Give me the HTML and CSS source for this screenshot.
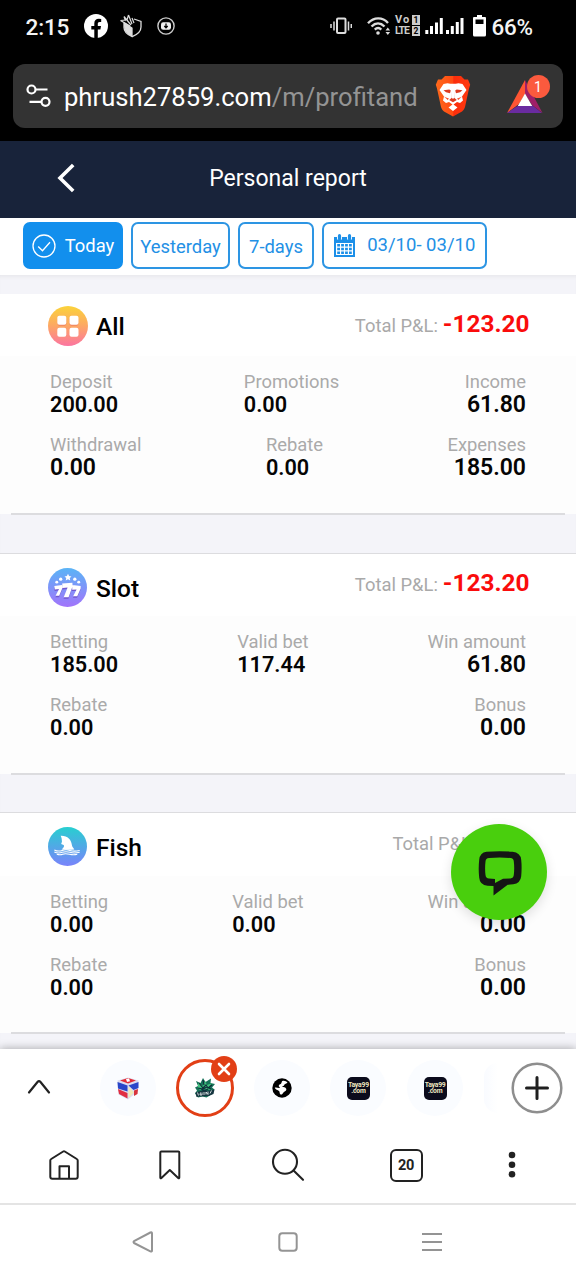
FILE: index.html
```html
<!DOCTYPE html>
<html lang="en">
<head>
<meta charset="utf-8">
<meta name="viewport" content="width=device-width, initial-scale=1">
<title>Personal report</title>
<link rel="stylesheet" href="styles.css">
</head>
<body>
<div class="phone">
  <div class="status">
    <span class="clock">2:15</span>
    <svg class="st-fb" width="24" height="24" viewBox="0 0 24 24"><circle cx="12" cy="12" r="12" fill="#fff"/><path d="M10.300 24v-8.600H7.300v-3.400h3V9.400c0-3 1.800-4.600 4.500-4.600l2.400.2v3h-1.500c-1.400 0-1.900.8-1.900 1.800V12h3.200l-.6 3.400h-2.600V24z" fill="#000"/></svg>
    <svg class="st-shield" width="24" height="24" viewBox="0 0 24 24" fill="none" stroke="#ddd" stroke-width="1.300"><path d="M4 9v4.500c0 4.500 4.500 7.600 8.200 9.200 4-1.700 8.800-5 8.800-9.700V7.500l-7-2.500"/><path d="M4.500 9l7.500 5v8C8.500 20 5 17.500 4.800 13z" fill="#ddd"/><path d="M.5 6.500L10 12M4 2.500L11 11M8.500 1l3.500 9M.5 6.500L6 6M4 2.500L5.500 7M8.500 1L7 6M12 4l2 5" stroke-width="1.200"/></svg>
    <svg class="st-rec" width="18" height="18" viewBox="0 0 18 18"><circle cx="9" cy="9" r="8.100" fill="none" stroke="#ccc" stroke-width="1.400"/><rect x="4" y="5.300" width="10" height="7.400" rx="2.200" fill="#eee"/><path d="M9 6.500v4M7.300 9L9 10.800 10.700 9" stroke="#000" fill="none" stroke-width="1.300"/></svg>
    <svg class="st-vib" width="22" height="18" viewBox="0 0 22 18" fill="none" stroke="#ddd" stroke-width="2"><rect x="7" y="1.500" width="8.500" height="14.500" rx="1"/><path d="M4 4.500v9M18.500 4.500v9M1 7v4M21.300 7v4" stroke-width="1.500"/></svg>
    <svg class="st-wifi" width="24" height="20" viewBox="0 0 24 20" fill="none" stroke="#ddd" stroke-width="2.400"><path d="M1 7.200C7 .8 15.500.8 21 7M4.500 10.500c4-4 9-4 13 0M7.800 13.700c2-2 4.500-2 6.500 0"/><circle cx="11" cy="17" r="1.800" fill="#ddd" stroke="none"/><path d="M18.500 14.500l2.300-3 2.300 3zM18.500 16l2.300 3 2.300-3z" fill="#ddd" stroke="none"/></svg>
    <span class="st-lte"><span class="lte-a">Vo</span><i>1</i><span class="lte-b">LTE</span><i>2</i></span>
    <svg class="st-sig" width="39" height="18" viewBox="0 0 39 18" stroke="#fff" stroke-width="3"><path d="M1.800 17v-4M6.500 17V9M11.500 17V5.500M16.300 17V1M22.500 17v-4M27.300 17V9M32.300 17V5M37 17V1"/></svg>
    <svg class="st-bat" width="13" height="22" viewBox="0 0 13 22"><path d="M4 0h5v2h3a1 1 0 0 1 1 1v17a1.500 1.500 0 0 1-1.500 1.500h-10A1.500 1.500 0 0 1 0 20V3a1 1 0 0 1 1-1h3z" fill="#fff"/><path d="M2.500 4.500h8V9h-8z" fill="#000"/></svg>
    <span class="pct">66%</span>
  </div>

  <div class="urlwrap">
    <div class="urlbar">
      <svg width="26" height="24" viewBox="0 0 26 24" fill="none" stroke="#fff" stroke-width="2.200"><circle cx="5.500" cy="5.500" r="4"/><path d="M9.500 5.500H21.500M3.500 17.800H15"/><circle cx="19.500" cy="17.800" r="4"/></svg>
      <span class="url">phrush27859.com<span class="path">/m/profitand</span></span>
      <svg class="lion" width="36" height="42" viewBox="0 0 36 42"><defs><linearGradient id="lg" x1="0" x2="1"><stop offset="0" stop-color="#ff6a1c"/><stop offset=".5" stop-color="#ff4a12"/><stop offset=".52" stop-color="#fb2d0b"/><stop offset="1" stop-color="#ff3a10"/></linearGradient></defs><path d="M10 1h16l3.500 3.600 3.500-.2 2.200 5.400-1.200 3.800-4 18.500c-.6 2-1.500 3.100-3 4.300L18 41.500 9 36.400c-1.500-1.200-2.400-2.300-3-4.300L2 13.600.8 9.800 3 4.400l3.500.2z" fill="url(#lg)"/><path d="M12.500 8.300q5.500 1 11 0l4 .7 4 6-4.500 6.500 1 4-3 2.500-3-1-3.500 2.500 4 3-4.500 3.500-4.500-3.500 4-3-3.500-2.500-3 1-3-2.500 1-4L4.500 15l4-6z" fill="#fff"/><path d="M8.500 15.200l5.800-.8 1.500 1.200-.8 2.600-4-.9zM27.500 15.200l-5.800-.8-1.500 1.200.8 2.600 4-.9z" fill="#dd3b20"/><path d="M16.300 15.500l.5 7.300-2.600 2.300 3.800 2.100 3.800-2.100-2.600-2.300.5-7.300-.7 8h-2z" fill="#dd3b20"/><path d="M9 21.500l3.700 3.500 1.300-1.500-3-1zM27 21.500L23.300 25 22 23.500l3-1z" fill="#f7502c"/></svg>
      <div class="bat">
        <svg width="38" height="34" viewBox="0 0 38 34"><path d="M19 0v14l-6 10L1 33z" fill="#ff5533"/><path d="M1 33l12-8h13l10 8z" fill="#6a2ba0"/><path d="M19 0l17.500 33L26 25l-7-11z" fill="#a01f68"/><path d="M19 13.500l7.200 12.500H11.800z" fill="#fff"/></svg>
        <span class="badge">1</span>
      </div>
    </div>
  </div>

  <header class="head">
    <svg class="back" width="20" height="32" viewBox="0 0 20 32" fill="none" stroke="#fff" stroke-width="3.600"><path d="M17.200 3L4 16l13.200 13"/></svg>
    <h1>Personal report</h1>
  </header>

  <nav class="filters">
    <button class="pill active"><svg width="24" height="24" viewBox="0 0 24 24" fill="none" stroke="#fff" stroke-width="1.300"><circle cx="12" cy="12" r="11"/><path d="M6.200 12.500l4.300 4.300 7.500-8.600"/></svg><span>Today</span></button>
    <button class="pill plain wide">Yesterday</button>
    <button class="pill plain">7-days</button>
    <button class="pill date"><svg width="21" height="23" viewBox="0 0 21 23"><path d="M0 3h21v20H0z" fill="#1c8fe8"/><path d="M2 9h17v12H2z" fill="#fff"/><path d="M3.200 11.300h14.600M3.200 15h14.600M3.200 18.700h14.600" stroke="#1c8fe8" stroke-width="2.600" stroke-dasharray="2.800 1.130"/><path d="M5.500 0v5.500M15.500 0v5.500" stroke="#fff" stroke-width="5"/><path d="M5.500 1.700v3M15.500 1.700v3" stroke="#1c8fe8" stroke-width="3.200" stroke-linecap="round"/></svg><span>03/10- 03/10</span></button>
  </nav>

  <main class="report">
    <section class="card first">
      <div class="card-head">
        <svg class="cat" width="40" height="40" viewBox="0 0 40 40"><defs><linearGradient id="ga" x2="0" y2="1"><stop offset="0" stop-color="#fbd33a"/><stop offset=".5" stop-color="#fda765"/><stop offset="1" stop-color="#fb75a0"/></linearGradient></defs><circle cx="20" cy="20" r="20" fill="url(#ga)"/><g fill="#ee8262"><rect x="9.500" y="11" width="8.800" height="8.800" rx="2"/><rect x="21.500" y="11" width="8.800" height="8.800" rx="2"/></g><g fill="#fff"><rect x="9.300" y="9.700" width="9" height="9" rx="2"/><rect x="21.500" y="9.700" width="9" height="9" rx="2"/><rect x="9.300" y="21.700" width="9" height="9" rx="2"/><rect x="21.500" y="21.700" width="9" height="9" rx="2"/></g></svg>
        <h2>All</h2>
        <div class="total">Total P&amp;L: <b>-123.20</b></div>
      </div>
      <div class="stats">
        <div class="row"><div class="stat"><span>Deposit</span><b>200.00</b></div><div class="stat"><span>Promotions</span><b>0.00</b></div><div class="stat end"><span>Income</span><b>61.80</b></div></div>
        <div class="row"><div class="stat"><span>Withdrawal</span><b class="lg">0.00</b></div><div class="stat"><span>Rebate</span><b>0.00</b></div><div class="stat end"><span>Expenses</span><b>185.00</b></div></div>
      </div>
    </section>

    <section class="card">
      <div class="card-head">
        <svg class="cat" width="39" height="39" viewBox="0 0 40 40"><defs><linearGradient id="gb" x2="0" y2="1"><stop offset="0" stop-color="#5ab4f6"/><stop offset="1" stop-color="#a274fb"/></linearGradient></defs><circle cx="20" cy="20" r="20" fill="url(#gb)"/><path d="M6.500 18.500l8-1 .5 2.500-3.500 8.500H7.800l3.500-7-4.300.5zM14.500 16l10.500-1 .3 3.500-4.200 11.500h-5l4-10-5 .5zM25 17.500l8.500 1v2.500L30 29h-4.200l3.500-7-4.500.2z" fill="#7257ce" transform="translate(-.2 1.500)"/><path d="M6.500 18.500l8-1 .5 2.500-3.500 8.500H7.800l3.500-7-4.300.5zM14.500 16l10.500-1 .3 3.500-4.200 11.500h-5l4-10-5 .5zM25 17.500l8.500 1v2.500L30 29h-4.200l3.500-7-4.500.2z" fill="#fff"/><g fill="#fff"><path d="M20.500 6l1.100 2.300 2.500.3-1.800 1.700.5 2.500-2.300-1.200-2.300 1.200.5-2.500-1.800-1.700 2.500-.3z"/><circle cx="13" cy="11.500" r="1.700"/><circle cx="27.500" cy="11.500" r="1.700"/><circle cx="9" cy="14.500" r="1.500"/><circle cx="31.500" cy="14.500" r="1.500"/></g></svg>
        <h2>Slot</h2>
        <div class="total">Total P&amp;L: <b>-123.20</b></div>
      </div>
      <div class="stats">
        <div class="row"><div class="stat"><span>Betting</span><b>185.00</b></div><div class="stat"><span>Valid bet</span><b>117.44</b></div><div class="stat end"><span>Win amount</span><b>61.80</b></div></div>
        <div class="row"><div class="stat"><span>Rebate</span><b>0.00</b></div><div class="stat end"><span>Bonus</span><b>0.00</b></div></div>
      </div>
    </section>

    <section class="card last">
      <div class="card-head">
        <svg class="cat" width="39" height="39" viewBox="0 0 40 40"><defs><linearGradient id="gc" x2="0" y2="1"><stop offset="0" stop-color="#27cfd0"/><stop offset="1" stop-color="#7a83fb"/></linearGradient></defs><circle cx="20" cy="20" r="20" fill="url(#gc)"/><path d="M13 9c7-.3 11 4 11.500 9.500.2 1.800 1.500 3 2.500 4.500-4 .7-8 .3-13 0 2.500-2 3-3.500 2-4.500l-2.500-1 .8-2.500c-.1-2.500-.3-4-1.300-6z" fill="#fff"/><g fill="none" stroke="#fff" stroke-width="1.100"><path d="M6.500 23.500q4 2 8 .5t8 0 10 0"/><path d="M6.500 25.700q4 1.700 8 .3t8 0 10 0"/><path d="M9 28q3.500 1 6 0t7 0 8 0"/></g></svg>
        <h2>Fish</h2>
        <div class="total">Total P&amp;L: <b>0.00</b></div>
      </div>
      <div class="stats">
        <div class="row"><div class="stat"><span>Betting</span><b>0.00</b></div><div class="stat"><span>Valid bet</span><b>0.00</b></div><div class="stat end"><span>Win amount</span><b>0.00</b></div></div>
        <div class="row"><div class="stat"><span>Rebate</span><b>0.00</b></div><div class="stat end"><span>Bonus</span><b>0.00</b></div></div>
      </div>
    </section>
  </main>

  <footer class="bottom">
    <div class="tabs">
      <svg class="caret" width="24" height="16" viewBox="0 0 24 16" fill="none" stroke="#222" stroke-width="2.200" stroke-linecap="round" stroke-linejoin="round"><path d="M2 13.500L10.500 3q1.500-1.600 3 0L22 13.500"/></svg>
      <div class="strip">
        <div class="tab"><svg width="24" height="24" viewBox="0 0 24 24"><path d="M1.500 4.500L12 1.500l10.500 3L22 15l-10 8.500-9.500-5z" fill="#dcdcf0"/><path d="M4 4.500l8-2.500 8 2.500-8 3z" fill="#e22b36"/><path d="M10 3l3-.8 1 3-3 .8z" fill="#fff"/><path d="M1.500 6l10 3.500v6L2 12.500z" fill="#2945c8"/><path d="M2 13l9.500 4v5.500L3 18z" fill="#e02e42"/><path d="M12.500 9.500L22.500 6v6l-5 2z" fill="#2b46c9"/><path d="M18 14.500l4-1.500-.5 5-3.500 2z" fill="#d8343c"/><path d="M12.500 10.500l5.500 6-5.500 5.500z" fill="#f0eab8"/></svg></div>
        <div class="tab current"><svg width="22" height="22" viewBox="0 0 22 22"><path d="M2 4l4.500 2L9 1l2.500 4L17 1.500 16.500 6l4.500 1-3 3.500 2.500 2-3 5-5 3-4-1-4.500 1-3-4 2-3-2-3L4 9z" fill="#167258"/><path d="M4 6l5 3 2-5 2 4 5-2-4 5 3 2-7-1-4 1-2-2z" fill="#3fc27c"/><path d="M5 6l4 5 3-3 2 3 4-3M4 11l5 1 4-2 4 2M9 3l1 5M7 12l3 2 4-2" stroke="#102e3b" stroke-width="1.200" fill="none"/><path d="M1.500 15.500l5-1.500 9-.5 5-1-1 4.500-5 2-9 .5-3 .5z" fill="#163640"/><path d="M3.500 15.500l1 3M6.500 15.500l-.5 2.500h2v-2.500M10 15v3M12 17.500v-2.500l2 2.500v-3M17.500 13.500l-1.500 3" stroke="#fff" stroke-width=".8" fill="none"/></svg><span class="close"><svg width="14" height="14" viewBox="0 0 14 14" stroke="#fff" stroke-width="2.600" stroke-linecap="round"><path d="M2 2l10 10M12 2L2 12"/></svg></span></div>
        <div class="tab"><svg width="20" height="20" viewBox="0 0 20 20"><circle cx="10" cy="10" r="9.700" fill="#000"/><path d="M10 3.200c2-1 4-.2 5.500 1.300-.8 1.600-3 1-3.300 2.600-.2 1.300-2 .9-2 2 1.400.2 3.300 0 4 1.600.8 2-1.700 2.600-2.700 3.800-1 1.100-1.300 2.300-3 2.100-1.200-1-.5-2.600-1.500-3.600-1.400-1.300-3.500-1.300-4.200-3.300 1.700-.6 3.300.6 5 .2.200-1.100-1.500-1.300-1-2.400.4-1.200 2-1 2.500-2.200z" fill="#fff"/></svg></div>
        <div class="tab"><span class="taya">Taya99<br>.com</span></div>
        <div class="tab"><span class="taya">Taya99<br>.com</span></div>
        <div class="tab cut"></div>
      </div>
      <svg class="plus" width="52" height="52" viewBox="0 0 52 52" fill="none"><circle cx="26" cy="26" r="24.300" stroke="#8e8e8e" stroke-width="2.500"/><path d="M26 15.500v21M15.500 26h21" stroke="#1f1f1f" stroke-width="3" stroke-linecap="round"/></svg>
    </div>
    <div class="tools">
      <svg width="32" height="32" viewBox="0 0 32 32" fill="none" stroke="#222" stroke-width="2" stroke-linejoin="round"><path d="M2.300 11.500v16.300q0 2 2 2h23.400q2 0 2-2V11.500q0-1-.9-1.500L16.800 2.500q-.8-.5-1.600 0L3.200 10q-.9.500-.9 1.500z"/><path d="M11.500 29.500V17.200h9.500v12.300"/></svg>
      <svg width="24" height="32" viewBox="0 0 24 32" fill="none" stroke="#222" stroke-width="2" stroke-linejoin="round"><path d="M2.300 3.500q0-1 1-1h17q1 0 1 1v25q0 1.300-1.100.4L11.800 21l-8.400 7.900q-1.100.9-1.100-.4z"/></svg>
      <svg width="34" height="34" viewBox="0 0 34 34" fill="none" stroke="#222" stroke-width="2.100" stroke-linecap="round"><circle cx="14" cy="13.700" r="12"/><path d="M22.800 22.800l9.200 9"/></svg>
      <span class="count">20</span>
      <svg width="8" height="28" viewBox="0 0 8 28" fill="#222"><circle cx="4" cy="4" r="3.300"/><circle cx="4" cy="13.700" r="3.300"/><circle cx="4" cy="23.300" r="3.300"/></svg>
    </div>
    <div class="sysnav">
      <svg width="22" height="22" viewBox="0 0 22 22" fill="none" stroke="#949494" stroke-width="2" stroke-linejoin="round"><path d="M2 10.200L18.400 1.500q1.600-.6 1.600 1v17q0 1.500-1.600.9L2 12q-1-.9 0-1.800z"/></svg>
      <svg width="20" height="20" viewBox="0 0 20 20" fill="none" stroke="#949494" stroke-width="2"><rect x="1.300" y="1.300" width="17.400" height="17.400" rx="3"/></svg>
      <svg width="20" height="20" viewBox="0 0 20 20" stroke="#949494" stroke-width="2"><path d="M0 2h20M0 10h20M0 18h20"/></svg>
    </div>
  </footer>

  <button class="chat" aria-label="Chat"><svg width="48" height="48" viewBox="0 0 48 48"><path d="M11.500 3.700Q24.500 2.700 37.500 3.700q8 .8 8.700 8 .8 7.500 0 16.600-.7 7-8 8-3 .5-5.500.5L18.500 47.500v-9.400l-6-.4q-7.600-.6-8.300-8-1-9 0-18 .7-7.200 7.300-8zM14 10q-3.300.3-3.500 3.500-.8 7 0 13.500.3 3.300 3.500 3.600l6 .4v4l8-4.200 7.500-.4q3-.3 3.300-3.400.8-7 0-13.500-.2-3.200-3.300-3.500-11-.8-21.500 0z" fill="#151515" fill-rule="evenodd"/></svg></button>
</div>
</body>
</html>
```
FILE: styles.css
```css
* { box-sizing: border-box; }

body {
  margin: 0;
  font-family: Roboto, "Liberation Sans", sans-serif;
  background: #fff;
}

svg { display: block; flex: none; }
h1, h2 { margin: 0; }
button { margin: 0; font: inherit; border: 0; padding: 0; }

.phone {
  position: relative;
  width: 576px;
  height: 1280px;
  overflow: hidden;
  display: flex;
  flex-direction: column;
}

/* Status bar */
.status {
  height: 53px;
  flex: none;
  background: #000;
  display: flex;
  align-items: center;
  padding: 0 0 2px 25.500px;
  color: #f4f4f4;
  font-size: 22.600px;
  font-weight: 500;
}
.clock { width: 58px; padding-top: 3px; letter-spacing: -.2px; }
.pct { padding-top: 3px; margin-left: 6px; font-size: 22.400px; letter-spacing: -.2px; }
.st-shield { margin-left: 12px; }
.st-rec { margin-left: 13.500px; }
.st-vib { margin-left: 154.500px; }
.st-wifi { margin-left: 15px; }
.st-lte {
  width: 25px;
  margin-left: 4.500px;
  display: grid;
  grid-template-columns: 16px 8px;
  gap: 1px;
  font-size: 10.500px;
  font-weight: 700;
  line-height: 10px;
  color: #ccc;
}
.lte-a { letter-spacing: 1px; font-size: 11px; }
.lte-b { letter-spacing: -1px; font-size: 10.500px; }
.st-lte i {
  font-style: normal;
  font-size: 8.500px;
  text-align: center;
  background: #ccc;
  color: #000;
}
.st-sig { margin-left: 4.500px; }
.st-bat { margin-left: 9px; }

/* Address bar */
.urlwrap {
  flex: none;
  height: 88px;
  padding: 11px 13px 13px;
  background: #000;
}
.urlbar {
  height: 64px;
  border-radius: 12px;
  background: #333;
  display: flex;
  align-items: center;
  padding-left: 12.500px;
}
.url {
  width: 383.500px;
  padding: 2px 0 0 12.500px;
  font-size: 25.600px;
  color: #fff;
  white-space: nowrap;
}
.path { color: #949494; }
.bat { position: relative; margin: 2px 0 0 35px; }
.badge {
  position: absolute;
  left: 20.500px;
  top: -5px;
  width: 23px;
  height: 23px;
  border-radius: 50%;
  background: #fb5a3e;
  color: #fff;
  font-size: 14px;
  line-height: 24px;
  text-align: center;
}

/* Page header */
.head {
  flex: none;
  height: 76.500px;
  background: #18233a;
  display: flex;
  align-items: center;
  padding-left: 56px;
}
.back { margin-bottom: 2px; }
.head h1 {
  width: 424px;
  margin-bottom: 2px;
  text-align: center;
  font-size: 23px;
  font-weight: 400;
  color: #fff;
}

.filters {
  flex: none;
  height: 57.500px;
  background: #fff;
  display: flex;
  gap: 8px;
  padding: 4.500px 0 0 23px;
}
.pill {
  height: 47px;
  border: 2px solid #2d95e3;
  border-radius: 7px;
  background: #fff;
  color: #2390e5;
  font-size: 18.400px;
  display: flex;
  align-items: center;
  justify-content: center;
  white-space: nowrap;
}
.active { width: 100px; background: #128fed; border-color: #128fed; color: #fff; gap: 9px; }
.active span, .date span { margin-bottom: 1px; }
.plain { width: 76px; padding-top: 1px; }
.wide { width: 99px; }
.date { width: 165px; gap: 12.500px; font-size: 18.500px; }

/* Report cards */
.report {
  flex: none;
  height: 774px;
  overflow: hidden;
  background: #f4f4f9;
  padding-top: 19px;
  box-shadow: inset 0 4px 4px -3px #e4e4e8;
}
.card {
  height: 221px;
  margin-bottom: 39px;
  background: #fdfdfd;
  border-top: 1px solid #dcdcdf;
}
.first { border-top: 0; height: 220px; }
.last { margin-top: -1px; }
.last .card-head { height: 63px; }
.last .stats { height: 156px; }
.card::after {
  content: "";
  display: block;
  height: 1.500px;
  margin: 0 11px;
  background: #dcdcdf;
}
.card-head {
  height: 62px;
  background: #fff;
  display: flex;
  align-items: flex-start;
  padding: 14px 46.500px 0 48px;
}
.first .card-head { padding-top: 12px; }
.card-head h2 {
  margin: 6px 0 0 9px;
  font-size: 24.500px;
  line-height: 30px;
  font-weight: 500;
  color: #000;
  width: 100px;
}
.first .cat { margin-right: -1px; }
.total {
  margin-left: auto;
  font-size: 18.400px;
  line-height: 30px;
  color: #a9a9a9;
  white-space: nowrap;
  display: flex;
  align-items: baseline;
  gap: 5px;
}
.first .total { margin-top: 3px; }
.total b { font-size: 24.400px; font-weight: 700; color: #fa0c0c; }
.stats { height: 157px; padding: 14px 50px 0; }
.row { display: flex; justify-content: space-between; height: 62.500px; }
.stat { display: flex; flex-direction: column; }
.stat span {
  font-size: 18.400px;
  line-height: 23px;
  color: #aaa;
}
.stat b {
  font-size: 21.700px;
  line-height: 23px;
  font-weight: 600;
  color: #050505;
}
.end { align-items: flex-end; }
.end b, .stat .lg { font-size: 23px; }

/* Browser controls */
.bottom {
  position: relative;
  flex: none;
  height: 231px;
  background: #fff;
  box-shadow: 0 -1px 8px rgba(0, 0, 0, .28);
}
.tabs { height: 78px; display: flex; align-items: center; padding-left: 27px; }
.caret { margin-bottom: 3px; }
.strip { width: 448px; display: flex; gap: 21px; padding-left: 49px; overflow: hidden; height: 78px; align-items: center; }
.tab {
  position: relative;
  flex: none;
  width: 56px;
  height: 56px;
  border-radius: 50%;
  background: #fafcff;
  display: grid;
  place-items: center;
}
.tab + .tab { margin-left: -.3px; }
.tab.current { border: 3px solid #e23f16; background: #fff; width: 58px; height: 58px; margin: 0 -1px; }
.close {
  position: absolute;
  left: 32px;
  top: -6px;
  width: 26px;
  height: 26px;
  border-radius: 50%;
  background: #e23f16;
  display: grid;
  place-items: center;
}
.taya {
  width: 23px;
  height: 23px;
  border-radius: 5px;
  background: #0b0b1c;
  color: #eee7c0;
  font-size: 6.800px;
  font-weight: 700;
  line-height: 6px;
  letter-spacing: -.2px;
  text-align: center;
  padding-top: 5.500px;
  white-space: nowrap;
}
.tab.cut { border-radius: 20px 0 0 20px; width: 14px; height: 50px; background: linear-gradient(90deg, #f9fbff, #fff); }
.plus { margin-left: 12px; }

.tools {
  height: 78px;
  display: grid;
  grid-template-columns: 106px 106px 130px 106px 106px;
  padding: 0 11px;
  place-items: center;
  border-bottom: 2px solid #e4e4e4;
}
.count {
  width: 33px;
  height: 33px;
  border: 2px solid #222;
  border-radius: 6px;
  text-align: center;
  font-size: 14.500px;
  line-height: 29px;
  font-weight: 700;
  letter-spacing: -.4px;
  color: #222;
}
.sysnav {
  height: 73px;
  display: grid;
  grid-template-columns: repeat(3, 144.500px);
  padding-left: 71px;
  place-items: center;
}

.chat {
  position: absolute;
  left: 451px;
  top: 824px;
  width: 96px;
  height: 96px;
  border-radius: 50%;
  background: #49cf0d;
  box-shadow: 0 4px 12px rgba(0, 0, 0, .12);
  display: grid;
  place-items: center;
}
```
